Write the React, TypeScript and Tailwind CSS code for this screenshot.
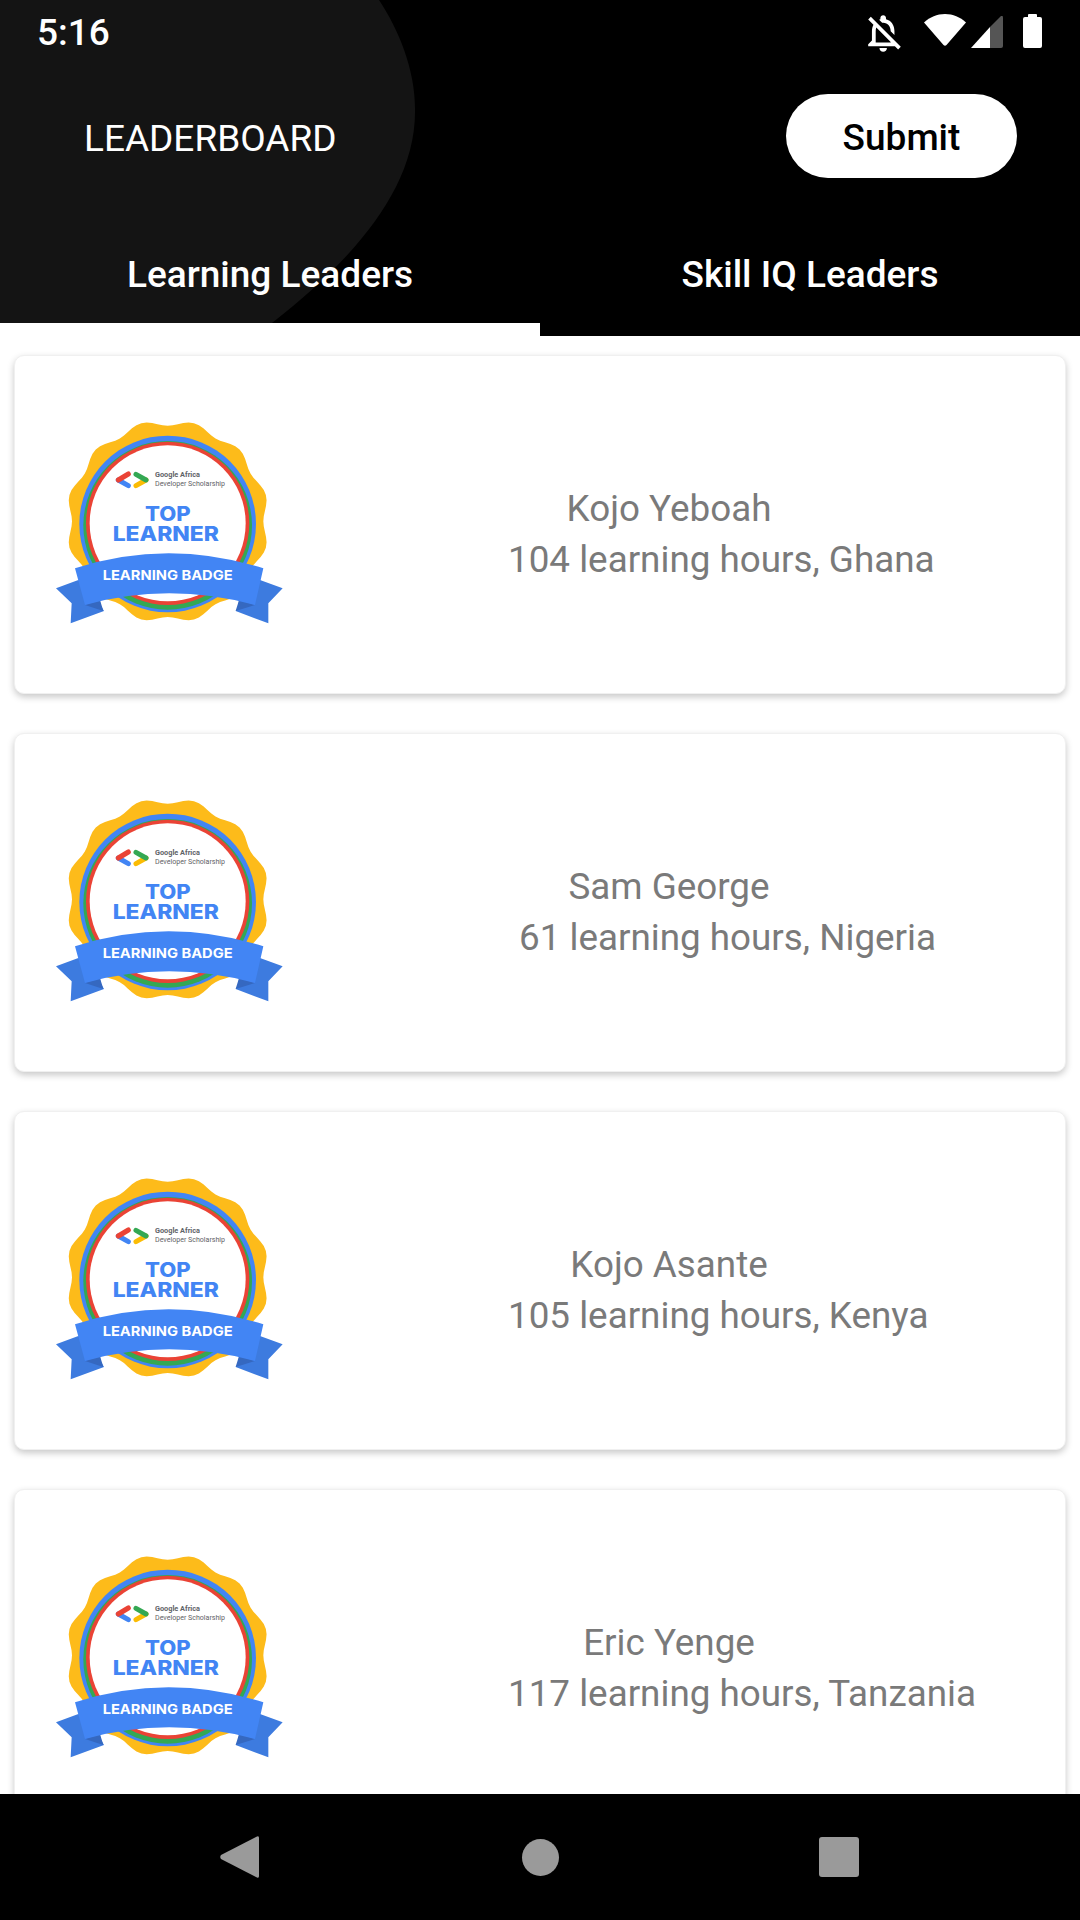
const leaders = [
  { name: "Kojo Yeboah", line: "104 learning hours, Ghana", indent: "" },
  { name: "Sam George", line: "61 learning hours, Nigeria", indent: "pl-[11px]" },
  { name: "Kojo Asante", line: "105 learning hours, Kenya", indent: "" },
  { name: "Eric Yenge", line: "117 learning hours, Tanzania", indent: "" },
]

// wavy edge of the yellow seal
function scallopPath() {
  const pts: string[] = []
  for (let i = 0; i < 360; i += 3) {
    const a = (i * Math.PI) / 180
    const r = 296 - 9 * Math.cos(12 * a)
    pts.push(`${(383 + r * Math.sin(a)).toFixed(1)},${(334 - r * Math.cos(a)).toFixed(1)}`)
  }
  return `M${pts.join("L")}Z`
}

const scallop = scallopPath()

function Badge() {
  return (
    <svg viewBox="0 0 780 690" className="w-[260px] h-[230px] shrink-0">
      <path d={scallop} fill="#fdbb1a" />
      <circle cx="383" cy="342" r="265" fill="#4285f4" />
      <circle cx="383" cy="346" r="253" fill="#34a853" />
      <circle cx="383" cy="340" r="245" fill="#ea4335" />
      <circle cx="383" cy="340" r="234" fill="#fff" />
      <path d="M235 210 L265 227" fill="none" stroke="#4285f4" strokeWidth="15" strokeLinecap="round" />
      <path d="M265 192 L235 210" fill="none" stroke="#ea4335" strokeWidth="15" strokeLinecap="round" />
      <path d="M318 210 L288 227" fill="none" stroke="#fbbc04" strokeWidth="15" strokeLinecap="round" />
      <path d="M288 193 L318 210" fill="none" stroke="#34a853" strokeWidth="15" strokeLinecap="round" />
      <text x="345" y="200" fontSize="20" fontWeight="700" fill="#5f6368" fontFamily="Roboto, sans-serif" textLength="135" lengthAdjust="spacingAndGlyphs">
        Google Africa
      </text>
      <text x="345" y="229" fontSize="20" fill="#5f6368" fontFamily="Roboto, sans-serif" textLength="210" lengthAdjust="spacingAndGlyphs">
        Developer Scholarship
      </text>
      <text x="315" y="333" fontSize="60" fontWeight="800" fill="#4285f4" fontFamily="Inter, sans-serif" textLength="137" lengthAdjust="spacingAndGlyphs">
        TOP
      </text>
      <text x="218" y="392" fontSize="60" fontWeight="800" fill="#4285f4" fontFamily="Inter, sans-serif" textLength="319" lengthAdjust="spacingAndGlyphs">
        LEARNER
      </text>
      <path d="M115 510 L48 535 L95 580 L92 640 L192 603 L150 530Z" fill="#3d7bdf" />
      <path d="M660 510 L728 535 L685 580 L685 640 L587 603 L630 530Z" fill="#3d7bdf" />
      <path d="M135 585 L190 603 L180 570Z" fill="#3568c0" />
      <path d="M645 585 L587 603 L597 570Z" fill="#3568c0" />
      <path d="M105 475 Q385 385 670 475 L645 585 Q385 515 135 585Z" fill="#4285f4" />
      <text x="188" y="510" fontSize="40" fontWeight="700" fill="#fff" fontFamily="Inter, sans-serif" textLength="390" lengthAdjust="spacingAndGlyphs">
        LEARNING BADGE
      </text>
    </svg>
  )
}

function LeaderCard({ leader }: { leader: (typeof leaders)[number] }) {
  return (
    <div className="h-[339px] shrink-0 flex items-center rounded-[10px] bg-white border border-[#f0f0f0] shadow-[0_3px_7px_rgba(0,0,0,0.22)] pl-[25px]">
      <Badge />
      <div className="ml-[208px] pt-[19px] text-[36.8px] leading-[51px] text-[#7a7a7a]">
        <div className="w-[322px] text-center">{leader.name}</div>
        <div className={`whitespace-nowrap ${leader.indent}`}>{leader.line}</div>
      </div>
    </div>
  )
}

function StatusIcons() {
  return (
    <div className="flex items-start pt-[14px]">
      <svg viewBox="3.9 2.4 17.6 19.7" className="w-[33px] h-[37px] mt-[1px]" fill="#fff">
        <path d="M12 22c1.1 0 2-.9 2-2h-4c0 1.1.9 2 2 2zm0-15.5c2.49 0 4 2.02 4 4.5v.1l2 2V11c0-3.07-1.63-5.64-4.5-6.32V4c0-.83-.67-1.5-1.5-1.5s-1.5.67-1.5 1.5v.68c-.24.06-.47.15-.69.23l1.64 1.64c.18-.02.36-.05.55-.05zM5.41 3.35L4 4.76l2.81 2.81C6.29 8.57 6 9.74 6 11v5l-2 2v1h14.24l1.74 1.74 1.41-1.41L5.41 3.35zM16 17H8v-6c0-.68.12-1.32.34-1.9L16 16.76V17z" />
      </svg>
      <svg viewBox="0 0 42 32" className="w-[42px] h-[32px] ml-[23px]" fill="#fff">
        <path d="M21 0C13 0 6 3 0 8.500L19.500 31Q21 32.500 22.500 31L42 8.500C36 3 29 0 21 0Z" />
      </svg>
      <svg viewBox="0 0 32 32" className="w-[32px] h-[32px] ml-[5px] mt-[2px]">
        <path d="M0 32L19 11V32Z" fill="#fff" />
        <path d="M19 11L30 0Q32 -1 32 2V30Q32 32 30 32H19Z" fill="#555" />
      </svg>
      <svg viewBox="0 0 19 34" className="w-[19px] h-[34px] ml-[20px]" fill="#fff">
        <path d="M5 3V1Q5 0 6 0H13Q14 0 14 1V3H17Q19 3 19 5V32Q19 34 17 34H2Q0 34 0 32V5Q0 3 2 3Z" />
      </svg>
    </div>
  )
}

export default function App() {
  return (
    <div className="w-[1080px] h-[1920px] flex flex-col overflow-hidden bg-white [font-family:Roboto,sans-serif]">
      <header className="relative h-[336px] shrink-0 flex flex-col bg-black text-white">
        <svg viewBox="0 0 540 323" className="absolute left-0 top-0 w-[540px] h-[323px]">
          <path d="M0 0H379C399 30 415 70 415 108C417 190 350 262 272 323H0Z" fill="#141414" />
        </svg>

        <div className="relative h-[63px] shrink-0 flex justify-between pl-[37px] pr-[38px]">
          <span className="pt-[3px] text-[37px] leading-[60px] font-medium">5:16</span>
          <StatusIcons />
        </div>

        <div className="relative flex items-start justify-between pl-[84px] pr-[63px] pt-[31px] h-[147px] shrink-0">
          <h1 className="mt-[20px] text-[37px] leading-[50px]">LEADERBOARD</h1>
          <button className="w-[231px] h-[84px] pt-[4px] rounded-[42px] bg-white text-black text-[37px] font-medium">
            Submit
          </button>
        </div>

        <div className="relative flex flex-1 text-[37px] font-medium">
          <div className="w-[540px] pt-[16px] flex items-center justify-center border-b-[13px] border-white">Learning Leaders</div>
          <div className="w-[540px] pt-[16px] flex items-center justify-center border-b-[13px] border-black">Skill IQ Leaders</div>
        </div>
      </header>

      <main className="flex-1 min-h-0 overflow-hidden flex flex-col gap-[39px] px-[14px] pt-[19px]">
        {leaders.map((leader) => (
          <LeaderCard key={leader.name} leader={leader} />
        ))}
      </main>

      <nav className="h-[126px] shrink-0 bg-black flex items-center justify-center pr-[2px]">
        <svg viewBox="0 0 39 42" className="w-[39px] h-[42px] mr-[263px]" fill="#9a9a9a">
          <path d="M37 0.500Q39 -0.500 39 2V40Q39 42.500 37 41.500L1 23Q-0.500 21 1 19Z" />
        </svg>
        <div className="w-[37px] h-[37px] rounded-full bg-[#9a9a9a]" />
        <div className="w-[40px] h-[40px] rounded-[3px] bg-[#9a9a9a] ml-[260px]" />
      </nav>
    </div>
  )
}
